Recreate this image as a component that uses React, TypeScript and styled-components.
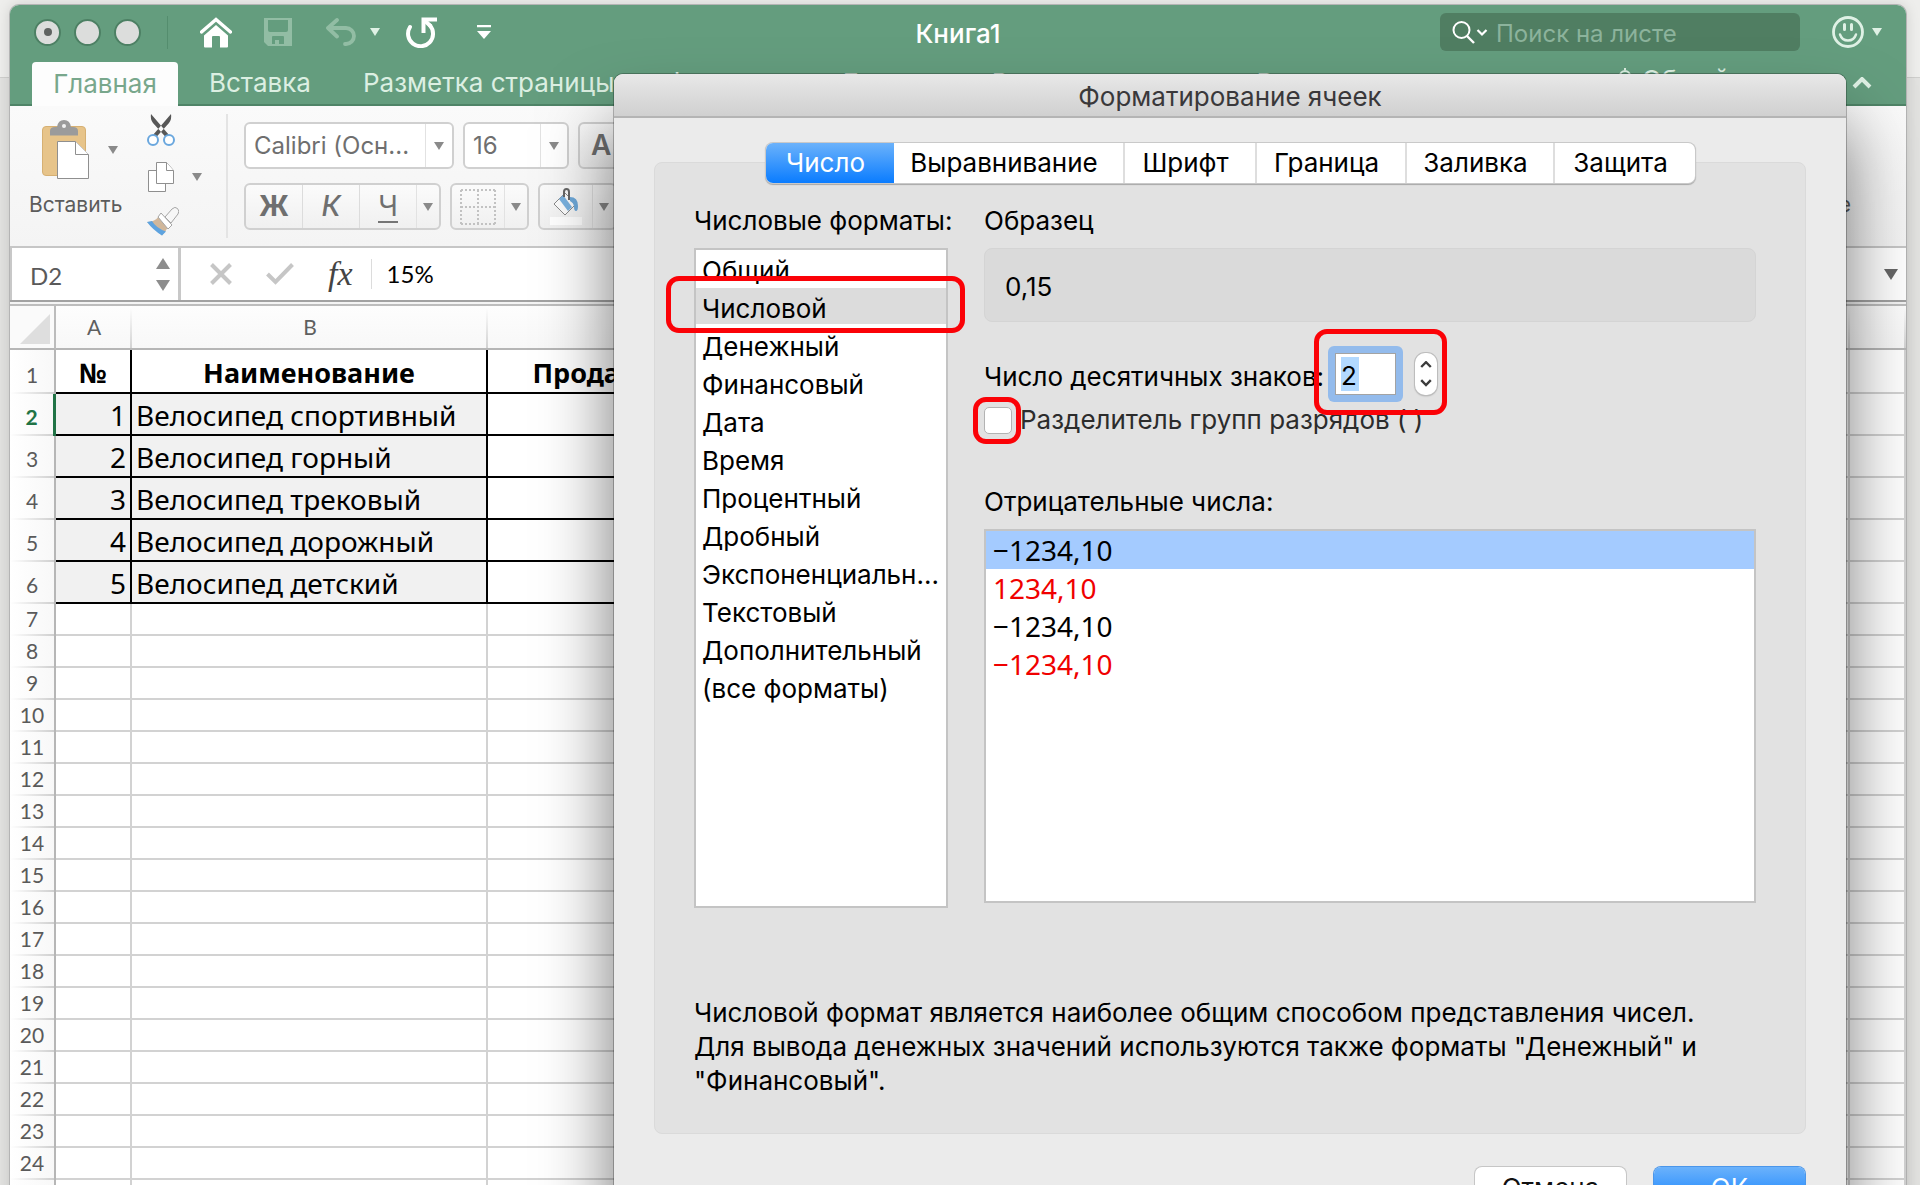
import React, { useState } from "react";
import styled, { createGlobalStyle, css } from "styled-components";

const ui = `Inter, Roboto, "Liberation Sans", sans-serif`;
const sheetFont = `"Noto Sans", "Open Sans", sans-serif`;
const narrow = `Lato, "Noto Sans", sans-serif`;

const GlobalStyle = createGlobalStyle`
  *, *::before, *::after { box-sizing: border-box; }
  body { margin: 0; font-family: ${ui}; font-size: 26px; line-height: 32px; color: #000; }
  button, input, select { font: inherit; color: inherit; margin: 0; padding: 0; border: 0; background: none; border-radius: 0; outline: none; }
  ul, p, h1, h2 { margin: 0; padding: 0; list-style: none; font-size: inherit; font-weight: inherit; }
  svg { display: block; }
`;

const Desktop = styled.div`
  position: relative;
  height: 100vh;
  overflow: hidden;
  padding: 5px 14px 0 10px;
  background: linear-gradient(#eeeeec 0 77px, #cfcfcd 77px 78px, #e2e2e0 78px 100%);
`;

/* ---------- workbook window ---------- */

const Workbook = styled.div`
  border-radius: 9px 9px 0 0;
  overflow: hidden;
  background: #fff;
  box-shadow: 0 0 0 1px #b4b4b4, 0 0 14px rgba(0, 0, 0, 0.15);
`;

const Header = styled.header`
  background: #649d7e;
  border-bottom: 2px solid #4f8467;
`;

const TitleBar = styled.div`
  display: grid;
  grid-template-columns: 1fr auto 1fr;
  align-items: center;
  height: 54px;
  padding: 0 24px;
`;

const Cluster = styled.div<{ $gap: number; $end?: boolean }>`
  display: flex;
  align-items: center;
  gap: ${(p) => p.$gap}px;
  ${(p) => p.$end && css`justify-content: flex-end;`}
`;

const Light = styled.button`
  display: grid;
  place-items: center;
  width: 27px;
  height: 27px;
  border: 2px solid #4d8064;
  border-radius: 50%;
  background: #dcdddc;
`;

const Dot = styled.span`
  width: 8px;
  height: 8px;
  border-radius: 50%;
  background: #5f6361;
`;

const QuickTools = styled.div`
  display: flex;
  align-items: center;
  margin-left: 26px;
  padding-left: 32px;
  border-left: 1px solid #548d6e;
  height: 33px;
`;

const IconButton = styled.button<{ $gap?: number; $color?: string }>`
  display: block;
  flex: none;
  margin-left: ${(p) => p.$gap ?? 0}px;
  color: ${(p) => p.$color ?? "#fff"};
`;

const BookTitle = styled.h1`
  padding-top: 4px;
  color: #fff;
  font-weight: 500;
`;

const Search = styled.label`
  display: flex;
  align-items: center;
  gap: 8px;
  width: 360px;
  height: 38px;
  padding: 0 12px;
  border-radius: 6px;
  background: #507e62;
  color: #fff;
  font-size: 24px;
  input { flex: 1; min-width: 0; height: 34px; padding-top: 2px; }
  input::placeholder { color: #8cb39c; opacity: 1; }
`;

const RibbonTabs = styled.nav`
  display: flex;
  height: 45px;
  padding: 3px 34px 0 22px;
`;

const RibbonTab = styled.button<{ $active?: boolean }>`
  flex: none;
  height: 42px;
  padding: 0 26px;
  color: #dcefe2;
  white-space: nowrap;
  ${(p) =>
    p.$active &&
    css`
      width: 146px;
      height: 44px;
      padding: 0;
      margin-right: 5px;
      border-radius: 4px 4px 0 0;
      background: #fdfdfd;
      color: #78a78c;
    `}
`;

const Share = styled.button`
  display: flex;
  align-items: center;
  gap: 8px;
  height: 36px;
  margin: 0 26px 0 auto;
  color: #dcefe2;
  white-space: nowrap;
`;

const Ribbon = styled.div`
  display: flex;
  height: 142px;
  padding: 8px 55px 8px 19px;
  border-bottom: 2px solid #c6c6c6;
  background: linear-gradient(#fafafa, #f4f4f4);
  color: #6f6f6f;
  font-size: 21px;
`;

const PasteGroup = styled.div`
  width: 96px;
  padding-top: 6px;
`;

const PasteRow = styled.div`
  display: flex;
  align-items: center;
  gap: 19px;
  padding-left: 13px;
  margin-bottom: 10px;
`;

const PasteLabel = styled.div`
  color: #5c5c5c;
`;

const ClipGroup = styled.div`
  display: grid;
  grid-template-columns: 32px 12px;
  column-gap: 13px;
  align-items: center;
  align-content: space-between;
  margin-left: 22px;
  height: 122px;
`;

const GroupRule = styled.div`
  width: 2px;
  margin: 0 15px 0 22px;
  background: #e4e4e4;
`;

const FontGroup = styled.div`
  display: grid;
  align-content: start;
  gap: 14px;
  padding: 8px 0 0 1px;
`;

const boxed = css`
  display: flex;
  flex: none;
  align-items: center;
  height: 47px;
  border: 2px solid #d0d0d0;
  border-radius: 6px;
`;

const CaretBox = styled.span`
  display: grid;
  place-items: center;
  width: 23px;
  height: 100%;
  border-left: 1px solid #e2e2e2;
  color: #8a8a8a;
`;

const Combo = styled.label<{ $w: number }>`
  ${boxed}
  width: ${(p) => p.$w}px;
  background: #fff;
  font-size: 24px;
  select { flex: 1; min-width: 0; height: 100%; padding-left: 8px; appearance: none; }
  ${CaretBox} { width: 27px; }
`;

const ToolBox = styled.div<{ $w: number }>`
  ${boxed}
  width: ${(p) => p.$w}px;
  background: linear-gradient(#fbfbfb, #f0f0f0);
`;

const Tool = styled.button`
  display: grid;
  flex: 1;
  place-items: center;
  height: 100%;
  & + & { border-left: 1px solid #dcdcdc; }
`;

const Glyph = styled.span<{ $weight?: number; $italic?: boolean; $under?: boolean }>`
  font-size: 28px;
  line-height: 30px;
  font-weight: ${(p) => p.$weight ?? 400};
  font-style: ${(p) => (p.$italic ? "italic" : "normal")};
  border-bottom: 2px solid ${(p) => (p.$under ? "#757575" : "transparent")};
`;

const EditingLabel = styled.div`
  align-self: flex-end;
  margin-left: auto;
  padding-bottom: 17px;
  color: #5c5c5c;
`;

const FormulaBar = styled.div`
  display: flex;
  align-items: center;
  height: 52px;
  padding-right: 8px;
  color: #5a5a5a;
  font-family: ${narrow};
`;

const NameBox = styled.label`
  display: flex;
  align-items: center;
  width: 171px;
  height: 52px;
  padding: 0 8px 0 18px;
  border-left: 2px solid #c8c8c8;
  border-right: 3px solid #c8c8c8;
  font-size: 24px;
  input { flex: 1; min-width: 0; padding-top: 4px; }
`;

const Spin = styled.span`
  display: grid;
  gap: 11px;
  color: #8d8d8d;
`;

const Fx = styled.button`
  margin-left: 34px;
  color: #444;
  font-family: "Liberation Serif", serif;
  font-size: 34px;
  font-style: italic;
`;

const FormulaInput = styled.input`
  flex: 1;
  min-width: 0;
  height: 30px;
  margin-left: 18px;
  padding-left: 15px;
  border-left: 1px solid #dcdcdc;
  color: #000;
  font-size: 24px;
`;

const SheetEdge = styled.div`
  height: 6px;
  border-top: 2px solid #a2a2a2;
  border-bottom: 2px solid #bdbdbd;
  background: #f4f4f4;
`;

/* ---------- sheet ---------- */

const Sheet = styled.table`
  width: 100%;
  table-layout: fixed;
  border-spacing: 0;
  border-collapse: separate;
  font-family: ${sheetFont};
  td, th { padding: 0; font-weight: 400; white-space: nowrap; }
`;

const ColHead = styled.th`
  height: 44px;
  vertical-align: middle;
  border-bottom: 2px solid #b6b6b6;
  background: linear-gradient(#fff, #d2d2d2) right / 2px 100% no-repeat, linear-gradient(#fdfdfd, #f8f8f8);
  color: #5f5f5f;
  font: 400 21px/28px ${narrow};
`;

const Corner = styled(ColHead)`
  border-right: 2px solid #bcbcbc;
  background: #fafafa;
`;

const RowHead = styled.th<{ $h: number; $on?: boolean }>`
  height: ${(p) => p.$h}px;
  && { padding-bottom: ${(p) => (p.$h > 32 ? 8 : 6)}px; }
  vertical-align: bottom;
  border-right: ${(p) => (p.$on ? "3px solid #217346" : "2px solid #b6b6b6")};
  background: linear-gradient(90deg, #fff, #cfcfcf) bottom / 100% 2px no-repeat, linear-gradient(90deg, #fff, #f8f8f8);
  color: ${(p) => (p.$on ? "#217346" : "#5a5a5a")};
  &&& { font: ${(p) => (p.$on ? 700 : 400)} 21px/22px ${narrow}; }
`;

type Kind = "head" | "num" | "name" | "blank" | "grid";

const Cell = styled.td<{ $kind: Kind }>`
  vertical-align: bottom;
  border: 0 solid ${(p) => (p.$kind === "grid" ? "#d2d2d2" : "#000")};
  border-width: 0 2px 2px 0;
  font-size: 28px;
  line-height: 32px;
  && { padding-bottom: ${(p) => (p.$kind === "grid" ? 0 : 3)}px; }
  ${(p) => p.$kind === "head" && css`text-align: center; && { font-weight: 700; font-size: 27px; }`}
  ${(p) => p.$kind === "num" && css`text-align: right; background: #f1f1f1; && { padding-right: 4px; }`}
  ${(p) => p.$kind === "name" && css`background: #f1f1f1; && { padding-left: 4px; }`}
`;

/* ---------- format dialog ---------- */

const Dialog = styled.section`
  position: absolute;
  top: 74px;
  left: 614px;
  right: 74px;
  border-radius: 9px 9px 0 0;
  background: #ebebeb;
  box-shadow: 0 0 0 1px rgba(0, 0, 0, 0.25), 0 50px 72px rgba(0, 0, 0, 0.55);
`;

const DialogTitle = styled.h2`
  height: 44px;
  border-radius: 9px 9px 0 0;
  border-bottom: 2px solid #b4b4b4;
  background: linear-gradient(#e8e8e8, #d0d0d0);
  color: #3a383a;
  line-height: 45px;
  text-align: center;
`;

const Tabs = styled.div`
  position: relative;
  z-index: 1;
  display: flex;
  width: fit-content;
  margin: 25px auto -21px;
  border-radius: 7px;
  background: #fff;
  box-shadow: 0 0 0 1px #c9c9c9, 0 1px 1px 1px #a8a8a8;
`;

const Tab = styled.button<{ $w: number; $on: boolean; $line: boolean }>`
  width: ${(p) => p.$w}px;
  height: 40px;
  padding-right: 8px;
  border-left: ${(p) => (p.$line ? "2px solid #dedede" : "0")};
  color: ${(p) => (p.$on ? "#fff" : "#000")};
  background: ${(p) => (p.$on ? "linear-gradient(#6bb2fb, #0a7cff)" : "transparent")};
  &:first-child { border-radius: 7px 0 0 7px; }
  &:last-child { border-radius: 0 7px 7px 0; }
`;

const Panel = styled.div`
  margin: 0 40px;
  padding: 42px 49px 35px 39px;
  border: 1px solid #dadada;
  border-radius: 8px;
  background: #e2e2e2;
`;

const Columns = styled.div`
  display: grid;
  grid-template-columns: 254px 1fr;
  column-gap: 36px;
`;

const Caption = styled.div`
  margin-bottom: 11px;
  white-space: nowrap;
`;

const List = styled.ul<{ $h: number; $gap: number }>`
  display: flex;
  flex-direction: column;
  gap: ${(p) => p.$gap}px;
  height: ${(p) => p.$h}px;
  border: 2px solid #c4c4c4;
  background: #fff;
`;

const FormatItem = styled.li<{ $on: boolean }>`
  position: relative;
  flex: none;
  height: 36px;
  padding: 5px 0 0 6px;
  line-height: 31px;
  white-space: nowrap;
  background: ${(p) => (p.$on ? "#dcdcdc" : "transparent")};
`;

const NegativeItem = styled.li<{ $on: boolean; $red: boolean }>`
  flex: none;
  height: 38px;
  padding-left: 7px;
  background: ${(p) => (p.$on ? "#a4cbff" : "transparent")};
  color: ${(p) => (p.$red ? "#f00000" : "#000")};
  font: 400 28px/38px ${sheetFont};
`;

const Sample = styled.output`
  display: block;
  height: 74px;
  padding-left: 20px;
  border: 1px solid #d4d4d4;
  border-radius: 8px;
  background: #dadada;
  line-height: 76px;
`;

const DecimalsRow = styled.div`
  display: flex;
  align-items: center;
  margin-top: 24px;
  height: 56px;
`;

const DecimalsLabel = styled.label`
  width: 344px;
  padding-top: 6px;
  white-space: nowrap;
`;

const DecimalsField = styled.div`
  position: relative;
  display: flex;
  align-items: center;
  gap: 12px;
`;

const NumberBox = styled.div`
  width: 75px;
  height: 56px;
  padding: 7px;
  border-radius: 6px;
  background: #93bbec;
`;

const NumberInner = styled.div`
  display: flex;
  align-items: center;
  height: 42px;
  padding: 3px 5px;
  border: 1px solid #a3a3a3;
  background: #fff;
  input {
    width: 18px;
    height: 34px;
    padding-top: 2px;
    background: #b2d9ff;
  }
`;

const Stepper = styled.div`
  display: grid;
  align-content: center;
  justify-content: center;
  gap: 1px;
  width: 22px;
  height: 42px;
  border-radius: 10px;
  background: #fff;
  box-shadow: 0 0 0 1px #bdbdbd, 0 1px 2px rgba(0, 0, 0, 0.3);
  button { height: 17px; display: grid; place-items: center; color: #3c3c3c; }
`;

const CheckRow = styled.div`
  display: flex;
  align-items: center;
  gap: 8px;
  margin: 2px 0 50px;
  color: #2c2c2c;
  white-space: nowrap;
`;

const CheckWrap = styled.span`
  position: relative;
  display: block;
  width: 28px;
  height: 27px;
`;

const Check = styled.input`
  display: block;
  appearance: none;
  width: 28px;
  height: 27px;
  && { border: 1px solid #b3b3b3; border-radius: 5px; background: #fff; }
  &:checked { box-shadow: inset 0 0 0 6px #0a7cff; }
`;

const Marker = styled.span<{ $inset: string }>`
  position: absolute;
  inset: ${(p) => p.$inset};
  border: 5px solid #fb0207;
  border-radius: 13px;
  pointer-events: none;
  z-index: 2;
`;

const Description = styled.p`
  margin-top: 88px;
  line-height: 34px;
  white-space: pre-line;
`;

const Actions = styled.div`
  display: flex;
  justify-content: flex-end;
  gap: 28px;
  padding: 33px 41px 30px;
`;

const Action = styled.button<{ $primary?: boolean }>`
  width: 151px;
  height: 42px;
  border-radius: 7px;
  background: ${(p) => (p.$primary ? "linear-gradient(#6bb2fb, #0a7cff)" : "#fff")};
  color: ${(p) => (p.$primary ? "#fff" : "#111")};
  box-shadow: 0 0 0 1px ${(p) => (p.$primary ? "#4a96ea" : "#c6c6c6")};
`;

/* ---------- icons ---------- */

const Caret = ({ w = 10, h = 8, up = false }: { w?: number; h?: number; up?: boolean }) => (
  <svg width={w} height={h} viewBox="0 0 10 8" preserveAspectRatio="none" fill="currentColor" aria-hidden>
    <path d={up ? "M0 8h10L5 0z" : "M0 0h10L5 8z"} />
  </svg>
);

const Chevron = ({ w, up = false, sw = 2 }: { w: number; up?: boolean; sw?: number }) => (
  <svg width={w} height={w * 0.6} viewBox="0 0 10 6" fill="none" stroke="currentColor" strokeWidth={sw} aria-hidden>
    <path d={up ? "M1 5l4-4 4 4" : "M1 1l4 4 4-4"} />
  </svg>
);

const HomeIcon = () => (
  <svg width="32" height="31" viewBox="0 0 32 31" aria-hidden>
    <path d="M1.500 15L16 2.500 30.500 15" fill="none" stroke="#fff" strokeWidth="3.400" strokeLinecap="round" />
    <path d="M16 8L28 18.500v11q0 1-1 1h-7V20q0-1-1-1h-6q-1 0-1 1v10.500H5q-1 0-1-1v-11z" fill="#fff" />
  </svg>
);

const SaveIcon = () => (
  <svg width="28" height="28" viewBox="0 0 28 28" aria-hidden>
    <path fillRule="evenodd" fill="#92bda4" d="M0 0h28v28H4l-4-4zM4 2v10q0 2 2 2h16q2 0 2-2V2zM8 26h3v-4h4v4h5v-7q0-1-1-1H9q-1 0-1 1z" />
  </svg>
);

const UndoIcon = () => (
  <svg width="31" height="28" viewBox="0 0 31 28" fill="none" stroke="#92bda4" strokeWidth="3.800" strokeLinecap="round" strokeLinejoin="round" aria-hidden>
    <path d="M11 2L2 10l9 8.500M2.500 10H20a8 8 0 0 1 0 16h-1" />
  </svg>
);

const RedoIcon = () => (
  <svg width="31" height="31" viewBox="0 0 31 31" fill="none" stroke="#fff" strokeWidth="4" aria-hidden>
    <path d="M4 10A12.500 12.500 0 1 0 24 8.500" strokeLinecap="round" />
    <path d="M17.500 16V2.500H31" />
    <path d="M17.500 2.500L25 9.500" />
  </svg>
);

const MoreIcon = () => (
  <svg width="14" height="14" viewBox="0 0 14 14" fill="#fff" aria-hidden>
    <path d="M0 0h14v2.200H0zM0 6h14l-7 8z" />
  </svg>
);

const SmileIcon = () => (
  <svg width="32" height="32" viewBox="0 0 32 32" fill="none" stroke="#dff1e5" aria-hidden>
    <circle cx="16" cy="16" r="14.500" strokeWidth="2.800" />
    <path d="M12.500 8.500v5M19.500 8.500v5" strokeWidth="3" strokeLinecap="round" />
    <path d="M8 18.500q2 6 8 6t8-6" strokeWidth="2.400" strokeLinecap="round" />
  </svg>
);

const SearchIcon = () => (
  <svg width="36" height="24" viewBox="0 0 36 24" fill="none" stroke="#fff" strokeWidth="2" aria-hidden>
    <circle cx="9.500" cy="10" r="8" />
    <path d="M15 16l7 7" strokeWidth="2.400" />
    <path d="M25.500 10l4.500 4.500 4.500-4.500" strokeWidth="2.200" />
  </svg>
);

const PersonIcon = () => (
  <svg width="18" height="24" viewBox="0 0 18 24" fill="none" stroke="currentColor" strokeWidth="2" aria-hidden>
    <circle cx="9" cy="8" r="5" />
    <path d="M1 23q0-8 8-8t8 8M9 0v2" />
  </svg>
);

const PasteIcon = () => (
  <svg width="47" height="59" viewBox="0 0 47 59" aria-hidden>
    <rect x=".5" y="6.500" width="43" height="49" rx="3.500" fill="#e7c48a" stroke="#d6b073" />
    <path d="M8 15.500V11q0-4 5-4h2q1-7 7-7t7 7h2q5 0 5 4v4.500z" fill="#9b9b9b" />
    <circle cx="22" cy="6" r="2" fill="#f2f2f2" />
    <path d="M15.500 21.500h18l13 13v24h-31z" fill="#fff" stroke="#8f8f8f" />
    <path d="M33.500 21.500v13h13" fill="#fff" stroke="#8f8f8f" />
  </svg>
);

const CutIcon = () => (
  <svg width="28" height="32" viewBox="0 0 28 32" aria-hidden>
    <path d="M4 0Q3 5 6 9l13.500 15 2.500-3zM24 0q1 5-2 9L8.500 24 6 21z" fill="#575757" />
    <circle cx="6" cy="26" r="5" fill="#fff" stroke="#6aa7de" strokeWidth="2" />
    <circle cx="22" cy="26" r="5" fill="#fff" stroke="#6aa7de" strokeWidth="2" />
  </svg>
);

const CopyIcon = () => (
  <svg width="28" height="31" viewBox="0 0 28 31" fill="#fff" stroke="#8f8f8f" aria-hidden>
    <path d="M1.500 9.500h17v21h-17z" />
    <path d="M9.500 1.500h10l7 8v13h-17z" />
    <path d="M19.500 1.500v8h7" />
  </svg>
);

const BrushIcon = () => (
  <svg width="32" height="29" viewBox="0 0 32 29" aria-hidden>
    <path d="M0 15q8 0 12-6l9 11q-2 4-6 8.500z" fill="#d0b79b" />
    <path d="M0 15q6 8 15 13.500l4-4Q9 21 5 14z" fill="#5ea3df" />
    <path d="M14 6l11 12-4 4L11 10z" fill="#fff" stroke="#a5a5a5" />
    <path d="M18 10l7-8q3-3 5.500-.5T31 7l-7 9z" fill="#f7f7f7" stroke="#a5a5a5" />
  </svg>
);

const BordersIcon = () => (
  <svg width="36" height="36" viewBox="0 0 36 36" fill="none" stroke="#c2c2c2" strokeWidth="2" strokeDasharray="2 2" aria-hidden>
    <path d="M1 1h34M1 18h34M1 35h34M1 1v34M18 1v34M35 1v34" />
  </svg>
);

const FillIcon = () => (
  <svg width="32" height="38" viewBox="0 0 32 38" aria-hidden>
    <path d="M4 16L15 5l11 11-11 11z" fill="#fdfdfd" stroke="#8a8a8a" />
    <path d="M9 11l4-4 9 12-4 4z" fill="#7ab2e0" />
    <path d="M20 9q8 0 8 9 0 5-2 5t-2-4q0-4-4-6z" fill="#6ea9da" />
    <path d="M14 9V4q0-3 2.500-3T19 4v8" fill="none" stroke="#666" strokeWidth="2" />
    <rect x="0" y="29" width="32" height="8" fill="#fff" />
  </svg>
);

const CancelIcon = () => (
  <svg width="22" height="22" viewBox="0 0 22 22" stroke="#c6c6c6" strokeWidth="4" aria-hidden>
    <path d="M1.500 1.500l19 19M20.500 1.500l-19 19" />
  </svg>
);

const AcceptIcon = () => (
  <svg width="28" height="22" viewBox="0 0 28 22" fill="none" stroke="#c6c6c6" strokeWidth="4" aria-hidden>
    <path d="M1.500 11l8 8L26.500 1.500" />
  </svg>
);

/* ---------- data ---------- */

const ribbonTabs = ["Вставка", "Разметка страницы", "Формулы", "Данные", "Рецензирование", "Вид"];
const columns = ["A", "B", "C", "D", "E", "F"];
const goods = ["Велосипед спортивный", "Велосипед горный", "Велосипед трековый", "Велосипед дорожный", "Велосипед детский"];
const emptyRows = Array.from({ length: 19 }, (_, i) => i + 7);
const dialogTabs: [string, number][] = [
  ["Число", 128],
  ["Выравнивание", 229],
  ["Шрифт", 132],
  ["Граница", 150],
  ["Заливка", 148],
  ["Защита", 142],
];
const formats = [
  "Общий", "Числовой", "Денежный", "Финансовый", "Дата", "Время", "Процентный",
  "Дробный", "Экспоненциальн...", "Текстовый", "Дополнительный", "(все форматы)",
];
const negatives = [
  { text: "−1234,10", red: false },
  { text: "1234,10", red: true },
  { text: "−1234,10", red: false },
  { text: "−1234,10", red: true },
];

function WorkbookHeader() {
  return (
    <Header>
      <TitleBar>
        <Cluster $gap={0}>
          <Cluster $gap={13}>
            <Light aria-label="Закрыть"><Dot /></Light>
            <Light aria-label="Свернуть" />
            <Light aria-label="Развернуть" />
          </Cluster>
          <QuickTools>
            <IconButton aria-label="Главная страница"><HomeIcon /></IconButton>
            <IconButton aria-label="Сохранить" $gap={32}><SaveIcon /></IconButton>
            <IconButton aria-label="Отменить" $gap={34}><UndoIcon /></IconButton>
            <IconButton aria-label="Список отмены" $gap={13} $color="#dff1e5"><Caret /></IconButton>
            <IconButton aria-label="Повторить" $gap={26}><RedoIcon /></IconButton>
            <IconButton aria-label="Настроить панель" $gap={40}><MoreIcon /></IconButton>
          </QuickTools>
        </Cluster>
        <BookTitle>Книга1</BookTitle>
        <Cluster $gap={32} $end>
          <Search>
            <SearchIcon />
            <input type="search" placeholder="Поиск на листе" aria-label="Поиск на листе" />
          </Search>
          <Cluster $gap={8}>
            <IconButton aria-label="Отзыв"><SmileIcon /></IconButton>
            <IconButton aria-label="Меню отзыва" $color="#dff1e5"><Caret /></IconButton>
          </Cluster>
        </Cluster>
      </TitleBar>
      <RibbonTabs>
        <RibbonTab $active>Главная</RibbonTab>
        {ribbonTabs.map((t) => <RibbonTab key={t}>{t}</RibbonTab>)}
        <Share><PersonIcon />Общий доступ</Share>
        <IconButton aria-label="Свернуть ленту" $color="#dff1e5"><Chevron w={20} up /></IconButton>
      </RibbonTabs>
    </Header>
  );
}

function RibbonBar() {
  return (
    <Ribbon>
      <PasteGroup>
        <PasteRow>
          <IconButton aria-label="Вставить из буфера"><PasteIcon /></IconButton>
          <IconButton aria-label="Параметры вставки" $color="#8a8a8a"><Caret /></IconButton>
        </PasteRow>
        <PasteLabel>Вставить</PasteLabel>
      </PasteGroup>
      <ClipGroup>
        <IconButton aria-label="Вырезать"><CutIcon /></IconButton><span />
        <IconButton aria-label="Копировать"><CopyIcon /></IconButton>
        <IconButton aria-label="Параметры копирования" $color="#8a8a8a"><Caret /></IconButton>
        <IconButton aria-label="Формат по образцу"><BrushIcon /></IconButton><span />
      </ClipGroup>
      <GroupRule />
      <FontGroup>
        <Cluster $gap={9}>
          <Combo $w={210}>
            <select aria-label="Шрифт"><option>Calibri (Осн...</option></select>
            <CaretBox><Caret /></CaretBox>
          </Combo>
          <Combo $w={106}>
            <select aria-label="Размер шрифта"><option>16</option></select>
            <CaretBox><Caret /></CaretBox>
          </Combo>
          <ToolBox $w={90}>
            <Tool aria-label="Увеличить шрифт"><Glyph $weight={600}>A</Glyph></Tool>
            <Tool aria-label="Уменьшить шрифт"><Glyph $weight={600}>A</Glyph></Tool>
          </ToolBox>
        </Cluster>
        <Cluster $gap={9}>
          <ToolBox $w={197}>
            <Tool aria-label="Полужирный"><Glyph $weight={700}>Ж</Glyph></Tool>
            <Tool aria-label="Курсив"><Glyph $weight={500} $italic>К</Glyph></Tool>
            <Tool aria-label="Подчёркнутый"><Glyph $under>Ч</Glyph></Tool>
            <CaretBox><Caret /></CaretBox>
          </ToolBox>
          <ToolBox $w={79}>
            <Tool aria-label="Границы"><BordersIcon /></Tool>
            <CaretBox><Caret /></CaretBox>
          </ToolBox>
          <ToolBox $w={79}>
            <Tool aria-label="Цвет заливки"><FillIcon /></Tool>
            <CaretBox><Caret /></CaretBox>
          </ToolBox>
        </Cluster>
      </FontGroup>
      <EditingLabel>Редактирование</EditingLabel>
    </Ribbon>
  );
}

function SheetGrid() {
  return (
    <Sheet>
      <colgroup>
        <col style={{ width: 46 }} /><col style={{ width: 76 }} /><col style={{ width: 356 }} />
        <col style={{ width: 280 }} /><col style={{ width: 220 }} /><col /><col style={{ width: 56 }} />
      </colgroup>
      <thead>
        <tr>
          <Corner aria-label="Выделить всё">
            <svg width="44" height="42" viewBox="0 0 44 42" aria-hidden><path d="M40 8v30H10z" fill="#dedede" /></svg>
          </Corner>
          {columns.map((c) => <ColHead key={c} scope="col">{c === "F" ? "" : c}</ColHead>)}
        </tr>
      </thead>
      <tbody>
        <tr>
          <RowHead scope="row" $h={44}>1</RowHead>
          <Cell $kind="head">№</Cell><Cell $kind="head">Наименование</Cell>
          <Cell $kind="head">Продажи, шт.</Cell><Cell $kind="head">Доля</Cell>
          <Cell $kind="grid" /><Cell $kind="grid" />
        </tr>
        {goods.map((g, i) => (
          <tr key={g}>
            <RowHead scope="row" $h={42} $on={i === 0}>{i + 2}</RowHead>
            <Cell $kind="num">{i + 1}</Cell><Cell $kind="name">{g}</Cell>
            <Cell $kind="blank" /><Cell $kind="blank" />
            <Cell $kind="grid" /><Cell $kind="grid" />
          </tr>
        ))}
        {emptyRows.map((n) => (
          <tr key={n}>
            <RowHead scope="row" $h={32}>{n}</RowHead>
            {columns.map((c) => <Cell key={c} $kind="grid" />)}
          </tr>
        ))}
      </tbody>
    </Sheet>
  );
}

function FormatDialog() {
  const [tab, setTab] = useState(0);
  const [format, setFormat] = useState(1);
  const [negative, setNegative] = useState(0);
  const [places, setPlaces] = useState(2);
  return (
    <Dialog role="dialog" aria-labelledby="format-title">
      <DialogTitle id="format-title">Форматирование ячеек</DialogTitle>
      <Tabs role="tablist">
        {dialogTabs.map(([name, w], i) => (
          <Tab key={name} role="tab" aria-selected={tab === i} $w={w} $on={tab === i} $line={i > 1} onClick={() => setTab(i)}>{name}</Tab>
        ))}
      </Tabs>
      <Panel>
        <Columns>
          <div>
            <Caption id="formats-caption">Числовые форматы:</Caption>
            <List $h={660} $gap={2} role="listbox" aria-labelledby="formats-caption">
              {formats.map((f, i) => (
                <FormatItem key={f} role="option" aria-selected={format === i} $on={format === i} onClick={() => setFormat(i)}>
                  {f}
                  {i === 1 && <Marker $inset="-12px -19px -9px -30px" />}
                </FormatItem>
              ))}
            </List>
          </div>
          <div>
            <Caption>Образец</Caption>
            <Sample>0,15</Sample>
            <DecimalsRow>
              <DecimalsLabel htmlFor="places">Число десятичных знаков:</DecimalsLabel>
              <DecimalsField>
                <NumberBox>
                  <NumberInner>
                    <input id="places" value={places} onChange={(e) => setPlaces(Number(e.target.value) || 0)} />
                  </NumberInner>
                </NumberBox>
                <Stepper>
                  <button aria-label="Больше" onClick={() => setPlaces(places + 1)}><Chevron w={12} up /></button>
                  <button aria-label="Меньше" onClick={() => setPlaces(Math.max(0, places - 1))}><Chevron w={12} /></button>
                </Stepper>
                <Marker $inset="-17px -10px -13px -14px" />
              </DecimalsField>
            </DecimalsRow>
            <CheckRow>
              <CheckWrap>
                <Check type="checkbox" id="groups" />
                <Marker $inset="-10px -9px -10px -11px" />
              </CheckWrap>
              <label htmlFor="groups">Разделитель групп разрядов ( )</label>
            </CheckRow>
            <Caption id="negative-caption">Отрицательные числа:</Caption>
            <List $h={374} $gap={0} role="listbox" aria-labelledby="negative-caption">
              {negatives.map((n, i) => (
                <NegativeItem key={i} role="option" aria-selected={negative === i} $on={negative === i} $red={n.red} onClick={() => setNegative(i)}>{n.text}</NegativeItem>
              ))}
            </List>
          </div>
        </Columns>
        <Description>
          {'Числовой формат является наиболее общим способом представления чисел.\nДля вывода денежных значений используются также форматы "Денежный" и\n"Финансовый".'}
        </Description>
      </Panel>
      <Actions>
        <Action>Отмена</Action>
        <Action $primary>ОК</Action>
      </Actions>
    </Dialog>
  );
}

export default function App() {
  return (
    <Desktop>
      <GlobalStyle />
      <Workbook>
        <WorkbookHeader />
        <RibbonBar />
        <FormulaBar>
          <NameBox>
            <input aria-label="Имя ячейки" defaultValue="D2" />
            <Spin><Caret w={14} h={11} up /><Caret w={14} h={11} /></Spin>
          </NameBox>
          <IconButton aria-label="Отменить ввод" $gap={29}><CancelIcon /></IconButton>
          <IconButton aria-label="Принять ввод" $gap={34}><AcceptIcon /></IconButton>
          <Fx aria-label="Вставить функцию">fx</Fx>
          <FormulaInput aria-label="Формула" defaultValue="15%" />
          <IconButton aria-label="Развернуть строку формул" $color="#666"><Caret w={14} h={11} /></IconButton>
        </FormulaBar>
        <SheetEdge />
        <SheetGrid />
      </Workbook>
      <FormatDialog />
    </Desktop>
  );
}
